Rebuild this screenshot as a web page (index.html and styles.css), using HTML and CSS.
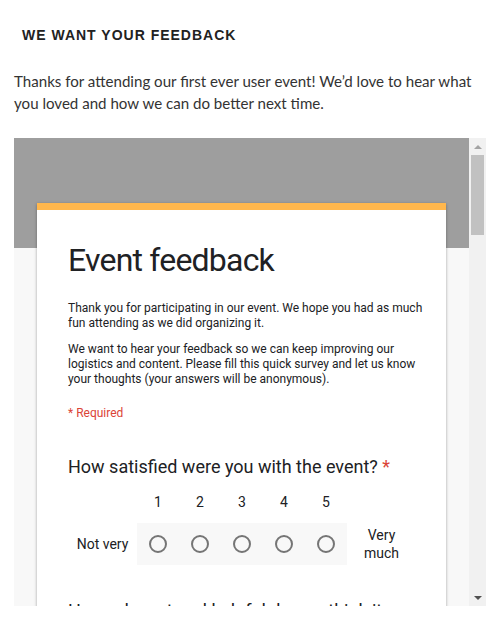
FILE: index.html
```html
<!DOCTYPE html>
<html>
<head>
    <title>We want your feedback</title>
    <meta charset="utf-8">
    <link rel="stylesheet" href="styles.css">
</head>
<body>
    <div class="page">
        <h2 class="widget-title">We want your feedback</h2>
        <p class="intro">Thanks for attending our first ever user event! We’d love to hear what you loved and how we can do better next time.</p>

        <div class="frame">
            <div class="viewport">
                <div class="form-header"></div>
                <div class="card">
                    <h1 class="form-title">Event feedback</h1>
                    <div class="form-desc">
                        <p>Thank you for participating in our event. We hope you had as much fun attending as we did organizing it.</p>
                        <p>We want to hear your feedback so we can keep improving our logistics and content. Please fill this quick survey and let us know your thoughts (your answers will be anonymous).</p>
                    </div>
                    <div class="required-note">* Required</div>

                    <div class="question">
                        <div class="q-title">How satisfied were you with the event? <span class="star">*</span></div>
                        <div class="scale">
                            <div class="scale-label"></div>
                            <div class="scale-nums">
                                <span>1</span><span>2</span><span>3</span><span>4</span><span>5</span>
                            </div>
                            <div class="scale-label"></div>
                            <div class="scale-label">Not very</div>
                            <div class="scale-radios">
                                <span class="radio"></span>
                                <span class="radio"></span>
                                <span class="radio"></span>
                                <span class="radio"></span>
                                <span class="radio"></span>
                            </div>
                            <div class="scale-label">Very much</div>
                        </div>
                    </div>

                    <div class="question">
                        <div class="q-title">How relevant and helpful do you think it was for your job?</div>
                    </div>
                </div>
            </div>
            <div class="scrollbar">
                <div class="arrow up"></div>
                <div class="track">
                    <div class="thumb"></div>
                </div>
                <div class="arrow down"></div>
            </div>
        </div>
    </div>
</body>
</html>
```

FILE: styles.css
```css
html, body {
    margin: 0;
    padding: 0;
    background: #fff;
}
.page {
    padding: 0 13px 0 14px;
}
.widget-title {
    margin: 0;
    padding: 27px 0 0 8px;
    font-family: "Liberation Sans", Arial, sans-serif;
    font-size: 14px;
    font-weight: bold;
    line-height: 16px;
    letter-spacing: 1px;
    text-transform: uppercase;
    color: #222;
}
.intro {
    margin: 27px 0 0 0;
    font-family: "Lato", "Liberation Sans", sans-serif;
    font-size: 15.1px;
    line-height: 22px;
    color: #333;
}

/* embedded form */
.frame {
    display: flex;
    margin-top: 24px;
    height: 468px;
}
.viewport {
    flex: 1;
    overflow: hidden;
    background: #f8f8f8;
}
.form-header {
    height: 110px;
    background: #9e9e9e;
}
.card {
    margin: -45px 23px 0 23px;
    background: #fff;
    border-top: 7px solid #ffb74d;
    box-shadow: 0 1px 3px rgba(0, 0, 0, 0.35);
    padding: 30px 20px 0 31px;
    font-family: Roboto, "Liberation Sans", sans-serif;
    color: #202124;
}
.form-title {
    margin: 0;
    font-size: 32px;
    font-weight: normal;
    line-height: 40px;
    letter-spacing: -0.8px;
}
.form-desc {
    margin-top: 21px;
    font-size: 12px;
    line-height: 15px;
}
.form-desc p {
    margin: 0 0 11px 0;
}
.required-note {
    margin-top: 19px;
    font-size: 12px;
    line-height: 15px;
    color: #db4437;
}
.question {
    padding-top: 34px;
}
.q-title {
    font-size: 18px;
    line-height: 24px;
}
.star {
    color: #db4437;
}
.scale {
    display: grid;
    grid-template-columns: 69px 210px 69px;
    margin-top: 12px;
    font-size: 14px;
}
.scale-nums, .scale-radios {
    display: grid;
    grid-template-columns: repeat(5, 42px);
    justify-items: center;
    align-items: center;
}
.scale-nums {
    height: 22px;
    line-height: 22px;
}
.scale-radios {
    margin-top: 10px;
    height: 42px;
    background: #f8f8f8;
}
.scale-label {
    display: flex;
    align-items: center;
    justify-content: center;
    text-align: center;
    line-height: 18px;
    margin-top: 10px;
    padding: 0 4px;
}
.scale-label:nth-child(-n+3) {
    margin-top: 0;
}
.radio {
    box-sizing: border-box;
    width: 18px;
    height: 18px;
    border: 2px solid #757575;
    border-radius: 50%;
}

/* fake scrollbar */
.scrollbar {
    width: 17px;
    background: #f1f1f1;
    display: flex;
    flex-direction: column;
}
.arrow {
    height: 17px;
    display: flex;
    align-items: center;
    justify-content: center;
}
.arrow::before {
    content: "";
    border-left: 4px solid transparent;
    border-right: 4px solid transparent;
}
.arrow.up::before {
    border-bottom: 4px solid #a3a3a3;
}
.arrow.down::before {
    border-top: 4px solid #505050;
}
.track {
    flex: 1;
}
.thumb {
    margin: 0 2px;
    height: 80px;
    background: #c1c1c1;
}
```
